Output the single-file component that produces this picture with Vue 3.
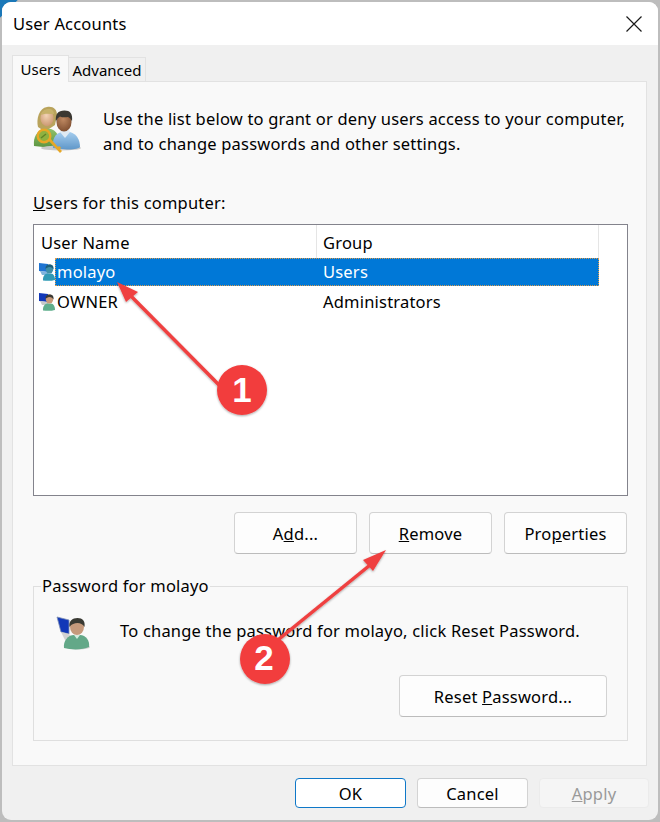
<script setup>
const users = [
  { name: 'molayo', group: 'Users', selected: true, screen: '#1f74d2', stand: '#7fb4dc', skin: '#3f8fa6', hair: '#1d5f7d', shirt: '#2f9ab5' },
  { name: 'OWNER', group: 'Administrators', selected: false, screen: '#1238b8', stand: '#c9c9c9', skin: '#c99a78', hair: '#3b3a35', shirt: '#5fae8c' }
]
</script>

<template>
  <div class="window">
    <header class="titlebar">
      <span>User Accounts</span>
      <svg class="close" width="16" height="16" viewBox="0 0 16 16">
        <path d="M.5.5l15 15M15.5.5l-15 15" stroke="#1a1a1a" stroke-width="1.2" fill="none" />
      </svg>
    </header>

    <div class="content">
      <nav class="tabs">
        <div class="tab active">Users</div>
        <div class="tab">Advanced</div>
      </nav>

      <section class="panel">
        <div class="intro">
          <svg class="intro-icon" width="50" height="50" viewBox="32 103 50 50">
            <defs>
              <radialGradient id="face" cx="0.45" cy="0.35" r="0.7">
                <stop offset="0" stop-color="#f2d3b5" />
                <stop offset="1" stop-color="#c9946d" />
              </radialGradient>
              <radialGradient id="darkface" cx="0.45" cy="0.35" r="0.7">
                <stop offset="0" stop-color="#c08a63" />
                <stop offset="1" stop-color="#7c4c2e" />
              </radialGradient>
              <linearGradient id="shirtb" x1="0" y1="0" x2="0" y2="1">
                <stop offset="0" stop-color="#a5cdee" />
                <stop offset="1" stop-color="#5f97c9" />
              </linearGradient>
              <linearGradient id="shirtg" x1="0" y1="0" x2="0" y2="1">
                <stop offset="0" stop-color="#8fc06a" />
                <stop offset="1" stop-color="#5b9440" />
              </linearGradient>
              <filter id="soft" x="-10%" y="-10%" width="120%" height="120%">
                <feGaussianBlur stdDeviation="0.35" />
              </filter>
            </defs>
            <g filter="url(#soft)">
              <path d="M34 146c-1-9 3-15 9-17h8c5 2 8 6 8 11l-6 8z" fill="url(#shirtg)" />
              <path d="M38 127c-2-8 1-19 9-20 6-1 10 2 10 8l-2 10-6 4h-8z" fill="#b9a35c" />
              <ellipse cx="47" cy="118" rx="6.6" ry="8.2" fill="url(#face)" />
              <path d="M41 115c1-4 4-6 8-6 3 0 5 2 5 5-4 0-9-1-13 1z" fill="#c7b26a" />
              <ellipse cx="61" cy="148" rx="20" ry="2.5" fill="#c9c9c9" />
              <path d="M53 148c-1-9 2-14 8-16h9c7 2 10 8 10 15-2 2-8 2.500-13 2.500z" fill="url(#shirtb)" />
              <path d="M60 132l5 6 5-6-2-4h-6z" fill="#dfeaf3" />
              <ellipse cx="64" cy="122" rx="7.500" ry="9.500" fill="url(#darkface)" />
              <path d="M56 122c-1-8 2-11.500 8.500-11.500 5.500 0 8.500 3 7.500 11-1-2-2-4-4-4.500-3 .5-6 .5-8-.5-2 1-3.500 3-4 5.500z" fill="#3b3833" />
              <path d="M48 140l12 13 2-2-2-2 1-1.500-2-1.500-1 1-8-9z" fill="#e8a726" />
              <circle cx="44" cy="136" r="6.300" fill="#8fb13f" stroke="#e8a726" stroke-width="2.400" />
              <path d="M41 138l5-4" stroke="#5e8526" stroke-width="1.500" />
            </g>
          </svg>
          <p>Use the list below to grant or deny users access to your computer,<br />and to change passwords and other settings.</p>
        </div>

        <div class="list-label"><u>U</u>sers for this computer:</div>

        <div class="list">
          <div class="list-head">
            <div class="head-cell first">User Name</div>
            <div class="head-cell">Group</div>
          </div>
          <div v-for="u in users" :key="u.name" class="row">
            <svg class="row-icon" width="16" height="18" viewBox="0 0 32 36">
              <path d="M0 0l18 2v16l-18-2z" :fill="u.screen" />
              <path d="M2 16l14 2 6 6H6z" :fill="u.stand" />
              <path d="M8 35c-1-8 4-14 9-14h7c5 0 8 6 8 13-6 2-16 2-24 1z" :fill="u.shirt" />
              <ellipse cx="21" cy="12" rx="7.500" ry="9" :fill="u.skin" />
              <path d="M13 12c0-7 3-9 8-9s9 2 8 10c-2-3-4-5-8-5s-6 2-8 4z" :fill="u.hair" />
            </svg>
            <div class="cells" :class="{ selected: u.selected }">
              <span class="name">{{ u.name }}</span>
              <span>{{ u.group }}</span>
            </div>
          </div>
        </div>

        <div class="list-actions">
          <button class="btn">A<u>d</u>d...</button>
          <button class="btn"><u>R</u>emove</button>
          <button class="btn">Pro<u>p</u>erties</button>
        </div>

        <fieldset class="group">
          <legend>Password for molayo</legend>
          <div class="group-line">
            <svg class="group-icon" width="34" height="34" viewBox="0 0 34 34">
              <ellipse cx="22" cy="31" rx="12" ry="2.500" fill="#cfcfcf" />
              <path d="M1 1l12 3 0 14-8-2z" fill="#1238b8" stroke="#7f8fb5" stroke-width=".8" />
              <path d="M5 16l8 2 6 6H9z" fill="#d2d2d2" />
              <path d="M8 32c-1-7 4-13 10-13h6c6 0 10 6 9 12-6 3-18 3-25 1z" fill="#63a888" />
              <path d="M18 19l3 4 3-4z" fill="#d7ece0" />
              <ellipse cx="21" cy="11" rx="7" ry="8" fill="#c69a7c" />
              <path d="M13.500 11c-1-6 3-9 8-9s8 3 7 9c-2-3-4-4-7-4s-6 1-8 4z" fill="#3a3a33" />
            </svg>
            <p>To change the password for molayo, click Reset Password.</p>
          </div>
          <div class="group-actions">
            <button class="btn wide">Reset <u>P</u>assword...</button>
          </div>
        </fieldset>
      </section>

      <footer class="footer">
        <button class="btn small primary">OK</button>
        <button class="btn small">Cancel</button>
        <button class="btn small disabled"><u>A</u>pply</button>
      </footer>
    </div>

    <svg class="annotations" width="660" height="822" viewBox="0 0 660 822">
      <defs>
        <filter id="shadow" x="-20%" y="-20%" width="140%" height="140%">
          <feDropShadow dx="0" dy="1" stdDeviation="1" flood-color="#000" flood-opacity="0.35" />
        </filter>
      </defs>
      <g filter="url(#shadow)">
        <path d="M225 391L124 289" stroke="#ef4040" stroke-width="3.500" fill="none" />
        <path d="M117 282L138 292L126 302z" fill="#ef4040" />
        <path d="M268 648L375 561" stroke="#ef4040" stroke-width="3.500" fill="none" />
        <path d="M386 550L363 560L373 571z" fill="#ef4040" />
        <circle cx="242" cy="390" r="25" fill="#f23c3d" />
        <circle cx="265" cy="659" r="25" fill="#f23c3d" />
      </g>
      <text x="242" y="402" class="badge-num">1</text>
      <text x="264" y="670" class="badge-num">2</text>
    </svg>
  </div>
</template>

<style>
html, body {
  margin: 0;
  background: linear-gradient(135deg, #1b78b8 0, #1b78b8 12px, #bdbdbd 13px);
  overflow: hidden;
}
</style>

<style scoped>
.window {
  position: relative;
  box-sizing: border-box;
  width: 656px;
  height: 818px;
  margin: 2px;
  display: flex;
  flex-direction: column;
  background: #f0f0f0;
  border-radius: 9px;
  font-family: "Noto Sans", "Open Sans", sans-serif;
  font-size: 16.5px;
  letter-spacing: 0.2px;
  color: #000;
  overflow: hidden;
}
.titlebar {
  flex: none;
  height: 43px;
  box-sizing: border-box;
  padding: 0 16px 0 11px;
  display: flex;
  align-items: center;
  justify-content: space-between;
  background: #fff;
}
.content {
  flex: 1;
  display: flex;
  flex-direction: column;
  padding: 10px 11px 0 10px;
}
.tabs {
  display: flex;
  align-items: flex-end;
  height: 27px;
  margin-bottom: -1px;
  position: relative;
  z-index: 1;
  font-size: 15px;
  letter-spacing: 0;
}
.tab {
  flex: none;
  box-sizing: border-box;
  height: 24px;
  width: 78px;
  margin: 0 0 1px -1px;
  display: flex;
  align-items: center;
  justify-content: center;
  background: #f0f0f0;
  border: 1px solid #e2e2e2;
  border-bottom: 0;
}
.tab.active {
  height: 27px;
  width: 57px;
  margin: 0;
  background: #f9f9f9;
}
.panel {
  box-sizing: border-box;
  height: 685px;
  padding: 21px 18px 0 20px;
  background: #f9f9f9;
  border: 1px solid #e2e2e2;
}
.intro {
  display: flex;
  align-items: flex-start;
  height: 85px;
}
.intro-icon {
  flex: none;
  margin: 0 21px 0 -1px;
}
.intro p {
  margin: 0;
  line-height: 25px;
  padding-top: 3px;
}
.list-label {
  height: 36px;
  line-height: 22px;
  padding-top: 4px;
  box-sizing: border-box;
}
.list {
  box-sizing: border-box;
  height: 272px;
  background: #fff;
  border: 1px solid #83838c;
}
.list-head {
  display: flex;
  height: 33px;
}
.head-cell {
  box-sizing: border-box;
  width: 282px;
  padding-left: 6px;
  line-height: 36px;
  border-right: 1px solid #e5e5e5;
}
.head-cell.first {
  width: 283px;
  padding-left: 7px;
}
.row {
  display: flex;
  align-items: center;
  height: 28px;
  margin-bottom: 2px;
  padding-left: 5px;
}
.row-icon {
  flex: none;
}
.cells {
  box-sizing: border-box;
  display: flex;
  align-items: center;
  width: 544px;
  height: 28px;
  padding: 0 0 2px 2px;
}
.cells.selected {
  background: #0078d7;
  color: #fff;
  outline: 1px dotted #d99b4f;
  outline-offset: -1px;
}
.name {
  width: 266px;
}
.list-actions {
  display: flex;
  justify-content: flex-end;
  gap: 12px;
  margin-top: 16px;
  padding-right: 1px;
}
.btn {
  box-sizing: border-box;
  width: 123px;
  height: 42px;
  padding: 0;
  background: #fdfdfd;
  border: 1px solid #d3d3d3;
  border-bottom-color: #bcbcbc;
  border-radius: 4px;
  font: inherit;
  letter-spacing: inherit;
  color: inherit;
}
.group {
  box-sizing: border-box;
  height: 165px;
  margin: 22px 0 0;
  padding: 0;
  border: 1px solid #dfdfdf;
}
.group legend {
  margin-left: 7px;
  padding: 0 1px;
  line-height: 20px;
}
.group-line {
  display: flex;
  align-items: flex-start;
  margin-top: 20px;
  padding-left: 22px;
}
.group-icon {
  flex: none;
  margin-right: 30px;
}
.group-line p {
  margin: 3px 0 0;
  line-height: 23px;
}
.group-actions {
  display: flex;
  justify-content: flex-end;
  padding-right: 20px;
  margin-top: 25px;
}
.btn.wide {
  width: 208px;
}
.footer {
  display: flex;
  justify-content: flex-end;
  gap: 11px;
  margin: 12px -2px 0 0;
}
.btn.small {
  width: 111px;
  height: 30px;
}
.btn.small.disabled {
  width: 110px;
}
.btn.primary {
  border: 1.500px solid #0f78c8;
  background: #fff;
}
.btn.disabled {
  background: #f5f5f5;
  border-color: #ebebeb;
  color: #9a9a9a;
}
.annotations {
  position: absolute;
  left: -2px;
  top: -2px;
  pointer-events: none;
}
.badge-num {
  fill: #fff;
  font-family: "Liberation Sans", sans-serif;
  font-weight: 700;
  font-size: 35px;
  letter-spacing: 0;
  text-anchor: middle;
}
</style>
